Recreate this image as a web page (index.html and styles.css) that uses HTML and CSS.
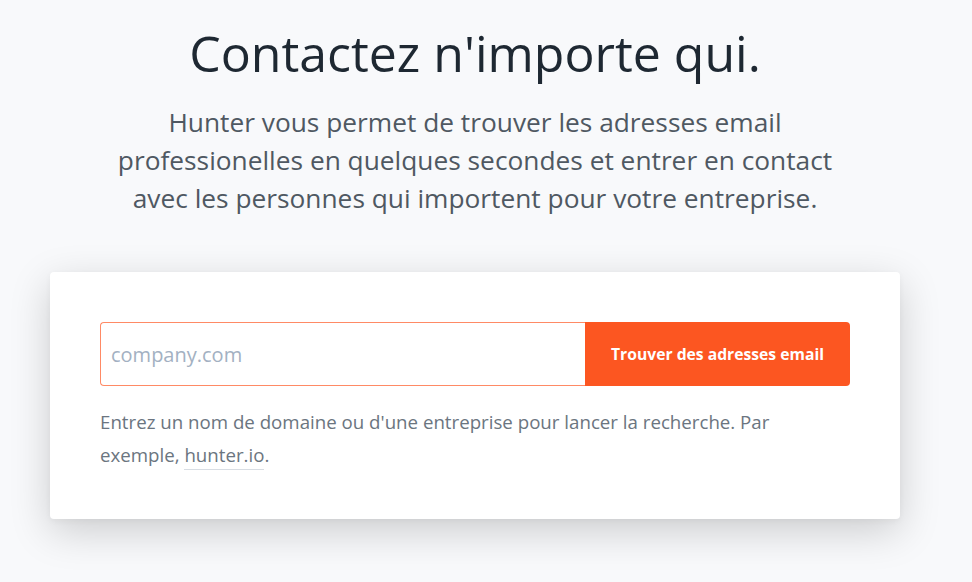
FILE: index.html
```html
<!DOCTYPE html>
<html lang="fr">
<head>
<meta charset="utf-8">
<link rel="stylesheet" href="styles.css">
</head>
<body>
<main class="page">
  <section class="hero">
    <h1 class="title">Contactez n'importe qui.</h1>
    <p class="lead">Hunter vous permet de trouver les adresses email professionelles en quelques secondes et entrer en contact avec les personnes qui importent pour votre entreprise.</p>
  </section>
  <section class="card">
    <form class="search">
      <input class="search-input" type="text" placeholder="company.com">
      <button class="search-btn" type="button">Trouver des adresses email</button>
    </form>
    <p class="help">Entrez un nom de domaine ou d'une entreprise pour lancer la recherche. Par exemple, <a class="example" href="#">hunter.io</a>.</p>
  </section>
</main>
</body>
</html>
```

FILE: styles.css
```css
* { box-sizing: border-box; }
html, body { margin: 0; padding: 0; }
body {
  background: #f8f9fb;
  font-family: "Open Sans", "Noto Sans", sans-serif;
  color: #1f2933;
}
.page {
  width: 950px;
  padding: 23px 50px 64px;
}
.hero {
  display: flex;
  flex-direction: column;
  align-items: center;
  text-align: center;
}
.title {
  margin: 0;
  font-size: 50px;
  font-weight: 400;
  line-height: 60px;
  color: #1e2832;
}
.lead {
  margin: 20px 0 0;
  max-width: 745px;
  font-size: 26.3px;
  line-height: 38px;
  color: #4f5862;
}
.card {
  margin-top: 55px;
  background: #fff;
  border-radius: 4px;
  padding: 50px 50px 48px;
  box-shadow: 0 12px 40px rgba(0, 0, 0, 0.18), 0 2px 6px rgba(0, 0, 0, 0.04);
}
.search {
  display: flex;
  height: 64px;
}
.search-input {
  flex: 1;
  min-width: 0;
  height: 64px;
  border: 1px solid #ff8a65;
  border-right: none;
  border-radius: 4px 0 0 4px;
  padding: 0 10px;
  font-family: inherit;
  font-size: 20px;
  color: #1e2832;
  outline: none;
}
.search-input::placeholder { color: #a3b1c2; }
.search-btn {
  width: 265px;
  height: 64px;
  border: none;
  border-radius: 0 4px 4px 0;
  background: #fc5621;
  color: #fff;
  font-family: inherit;
  font-weight: 700;
  font-size: 15.7px;
  cursor: pointer;
}
.help {
  margin: 19px 0 0;
  font-size: 18.7px;
  line-height: 33px;
  color: #6b7580;
}
.example {
  color: inherit;
  text-decoration: none;
  border-bottom: 1px solid #d8dde3;
  padding-bottom: 2px;
}
```
